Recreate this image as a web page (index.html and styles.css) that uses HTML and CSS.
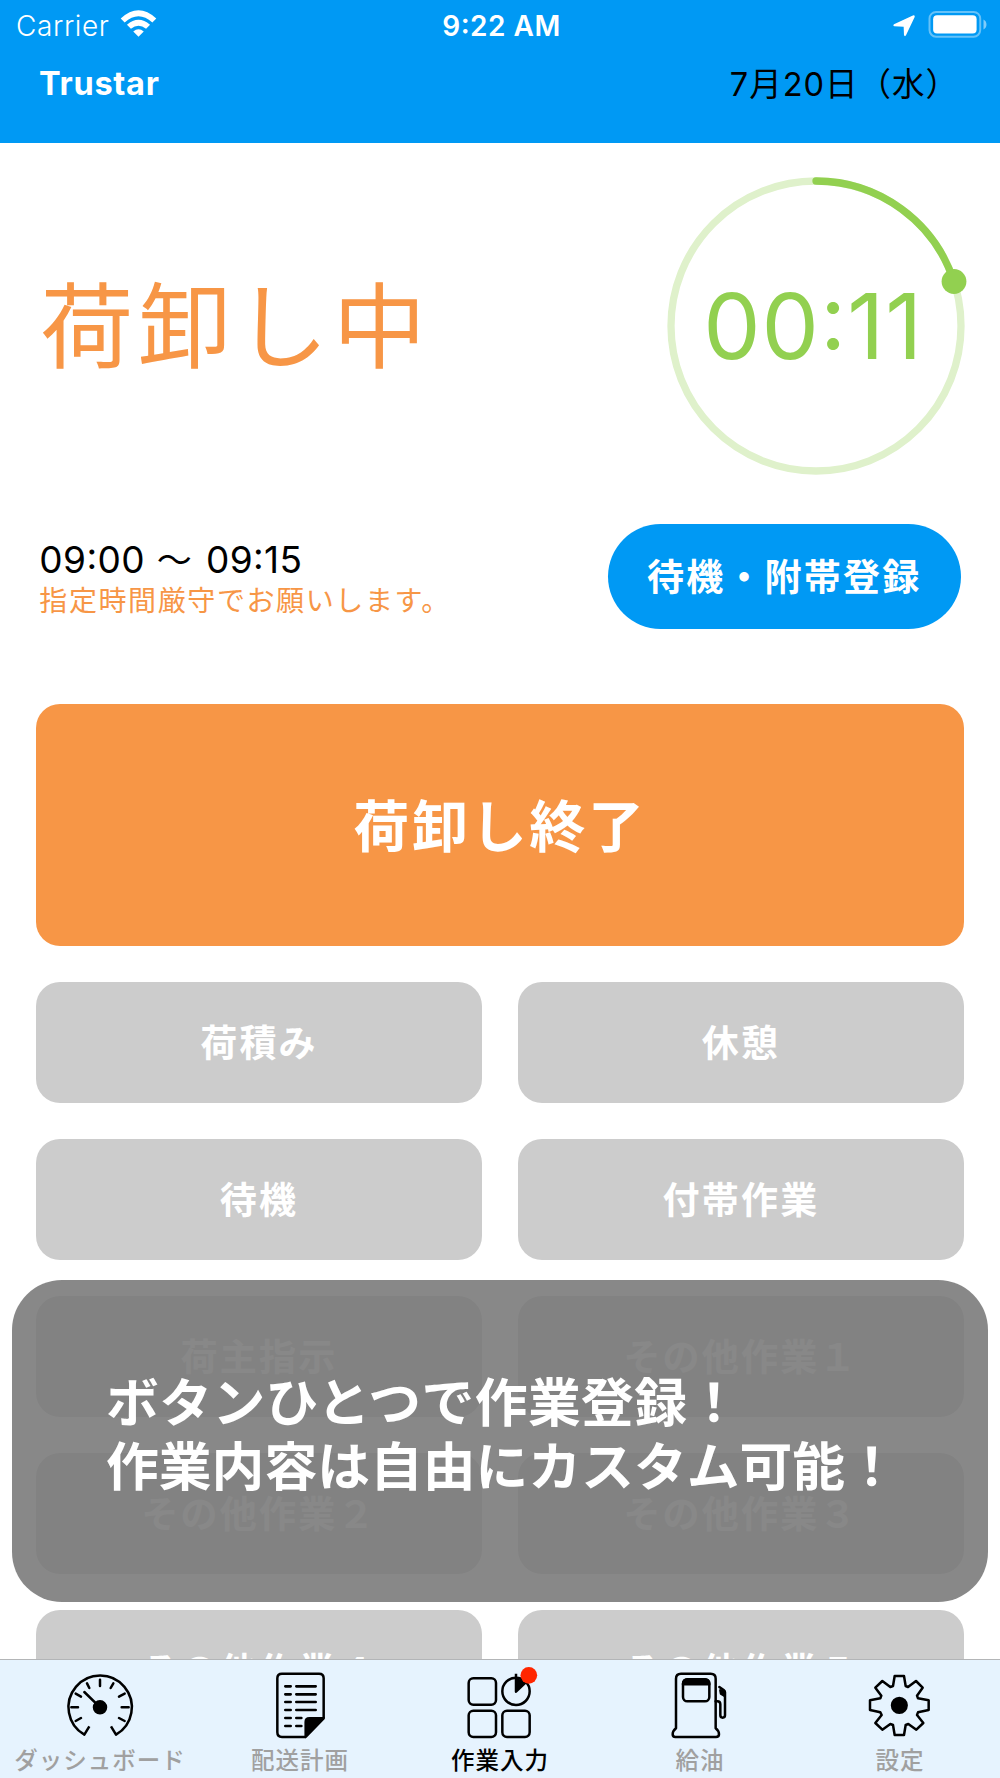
FILE: index.html
```html
<!DOCTYPE html>
<html lang="ja">
<head>
  <meta charset="UTF-8" />
  <meta name="viewport" content="width=device-width, initial-scale=1.0"/>
  <title>Trustar</title>
  <link rel="stylesheet" href="styles.css">
</head>
<body>
  <div class="app">
    <header class="header">
      <div class="status-bar">
        <div class="status-left">
          <span class="carrier">Carrier</span>
          <svg class="wifi" viewBox="0 0 110 82">
            <path d="M1 26 Q55 -24 109 26 L97 38 Q55 0 13 38 Z"/>
            <path d="M20 45 Q55 14 90 45 L78 57 Q55 38 32 57 Z"/>
            <path d="M39 65 Q55 52 71 65 L55 81 Z"/>
          </svg>
        </div>
        <span class="clock">9:22 AM</span>
        <div class="status-right">
          <svg class="location" viewBox="0 0 66 66">
            <path d="M62 1 Q66 1 65 6 L39 61 Q36 66 33 61 L32 35 L4 34 Q-1 32 3 28 L58 2 Z"/>
          </svg>
          <svg class="battery" viewBox="0 0 176 82">
            <rect class="battery-case" x="3" y="3" width="154" height="75" rx="20"/>
            <rect x="14" y="13" width="132" height="55" rx="12"/>
            <path class="battery-cap" d="M167 26 Q176 31 176 41 Q176 51 167 56 Z"/>
          </svg>
        </div>
      </div>
      <div class="title-bar">
        <h1 class="brand">Trustar</h1>
        <span class="date">7月20日（水）</span>
      </div>
    </header>

    <main class="content">
      <section class="status">
        <h2 class="status-name">荷卸し中</h2>
        <div class="timer">
          <svg class="timer-ring" viewBox="0 0 312 312">
            <circle class="ring-track" cx="156" cy="156" r="145"/>
            <path class="ring-value" d="M156 11 A145 145 0 0 1 294 112"/>
            <circle class="ring-dot" cx="294" cy="111.500" r="12.4"/>
          </svg>
          <span class="timer-text">00:11</span>
        </div>
      </section>

      <section class="schedule">
        <div class="schedule-info">
          <p class="schedule-time">09:00 <span class="tilde">〜</span> 09:15</p>
          <p class="schedule-note">指定時間厳守でお願いします。</p>
        </div>
        <button class="register-btn">待機・附帯登録</button>
      </section>

      <section class="work-grid">
        <button class="work-btn finish-btn">荷卸し終了</button>
        <button class="work-btn">荷積み</button>
        <button class="work-btn">休憩</button>
        <button class="work-btn">待機</button>
        <button class="work-btn">付帯作業</button>
        <button class="work-btn">荷主指示</button>
        <button class="work-btn">その他作業１</button>
        <button class="work-btn">その他作業２</button>
        <button class="work-btn">その他作業３</button>
        <button class="work-btn">その他作業４</button>
        <button class="work-btn">その他作業５</button>
      </section>
    </main>

    <nav class="tab-bar">
      <a class="tab">
        <svg class="tab-icon" viewBox="0 0 240 240">
          <path d="M88 184 L73 209 A95 95 0 1 1 168 209 L153 184"/>
          <path d="M120 44v19M81 55l7 14M47 86l16 9M34 127h20M47 168l16-9M160 55l-8 14M194 86l-17 9M206 127h-21M194 168l-17-9M73 81l45 44" stroke-linecap="round"/>
          <circle class="fill" cx="120" cy="127" r="18"/>
        </svg>
        <span>ダッシュボード</span>
      </a>
      <a class="tab">
        <svg class="tab-icon" viewBox="0 0 240 240">
          <path d="M137 216 H66 Q52 216 52 202 V40 Q52 26 66 26 H177 Q191 26 191 40 V160"/>
          <path class="fill" d="M137 216 V171 Q137 160 148 160 H191 Z"/>
          <path class="doc-lines" d="M76 64h16M109 64h58M76 88h16M109 88h58M76 111h16M109 111h58M76 135h16M109 135h58M76 159h16M109 159h15M76 183h16M109 183h15"/>
        </svg>
        <span>配送計画</span>
      </a>
      <a class="tab active">
        <svg class="tab-icon" viewBox="0 0 240 240">
          <rect x="26" y="40" width="82" height="79" rx="14"/>
          <rect x="26" y="137" width="82" height="79" rx="14"/>
          <rect x="127" y="137" width="82" height="79" rx="14"/>
          <circle cx="168" cy="79" r="41"/>
          <path class="fill" d="M168 26 V80 L195 54 L168 42"/>
          <circle class="badge" cx="206.500" cy="31" r="25"/>
        </svg>
        <span>作業入力</span>
      </a>
      <a class="tab">
        <svg class="tab-icon" viewBox="0 0 240 240">
          <path d="M48 190 V41 Q48 26 63 26 H152 Q167 26 167 41 V190 Q177 198 177 208 Q177 216 168 216 H46 Q38 216 38 208 Q38 198 48 190 Z"/>
          <rect x="69" y="43" width="79" height="66" rx="13"/>
          <path class="fill" d="M69 58 Q69 43 84 43 H133 Q148 43 148 58 Z"/>
          <path d="M167 109 H172 Q181 109 181 118 V151 Q181 158 188 158 Q195 158 195 151 V82 Q195 78 191 75 L178 66" stroke-linecap="round"/>
          <path class="fill" d="M181 76 L193 80 V92 L183 86 Z"/>
        </svg>
        <span>給油</span>
      </a>
      <a class="tab">
        <svg class="tab-icon" viewBox="0 0 240 240">
          <path d="M99 63 L104 33 H132 L137 63 L144 66 L168 48 L188 68 L171 92 L174 100 L206 106 V135 L174 142 L171 150 L190 174 L169 194 L145 177 L137 180 L132 210 H104 L99 180 L91 177 L67 194 L46 174 L65 150 L61 142 L30 135 V106 L61 100 L64 92 L46 68 L67 48 L91 66 Z"/>
          <circle class="fill" cx="118" cy="121" r="22"/>
        </svg>
        <span>設定</span>
      </a>
    </nav>

    <div class="guide">
      <p class="guide-lead">ボタンひとつで作業登録！</p>
      <p>作業内容は自由にカスタム可能！</p>
    </div>
  </div>
</body>
</html>
```

FILE: styles.css
```css
* {
  box-sizing: border-box;
}

body {
  margin: 0;
  background: #fff;
  font-family: Inter, 'Noto Sans CJK JP', sans-serif;
  color: #000;
}

h1, h2, p {
  margin: 0;
}

button {
  border: none;
  padding: 0;
  font-family: inherit;
  color: #fff;
}

.app {
  position: relative;
  display: flex;
  flex-direction: column;
  width: 1000px;
  height: 1778px;
  overflow: hidden;
}

/* header */
.header {
  flex: none;
  height: 142.6px;
  background: #0099f4;
}

.status-bar {
  display: grid;
  grid-template-columns: 1fr auto 1fr;
  align-items: center;
  height: 51px;
  padding: 0 13px 0 16px;
  color: #fff;
  font-size: 28px;
}

.status-left, .status-right {
  display: flex;
  align-items: center;
}

.status-left {
  gap: 10px;
}

.status-right {
  justify-content: flex-end;
  gap: 13px;
}

.carrier {
  font-weight: 300;
  letter-spacing: 0.6px;
}

.clock {
  font-weight: 600;
  letter-spacing: 0.5px;
  font-feature-settings: "case";
}

.status-bar svg {
  fill: #fff;
}

.wifi {
  width: 37px;
  height: 27px;
  margin-top: -4px;
}

.location {
  width: 22px;
  height: 22px;
}

.battery {
  width: 59px;
  height: 27px;
  margin-top: -2px;
}

.status-bar .battery-case {
  fill: none;
  stroke: rgba(255, 255, 255, 0.4);
  stroke-width: 6;
}

.status-bar .battery-cap {
  fill: rgba(255, 255, 255, 0.5);
}

.title-bar {
  display: flex;
  justify-content: space-between;
  align-items: center;
  height: 64px;
  padding: 0 41px 0 39px;
}

.brand {
  color: #fff;
  font-size: 32.500px;
  font-weight: 700;
  letter-spacing: 0.7px;
}

.date {
  padding-bottom: 3px;
  font-size: 32.500px;
  letter-spacing: 1px;
}

/* current work */
.content {
  flex: 1;
  min-height: 0;
  overflow: hidden;
  padding: 27.400px 36.300px 0;
}

.status {
  display: flex;
  justify-content: space-between;
  align-items: center;
  height: 312px;
}

.status-name {
  padding: 0 0 10px 4px;
  color: #f79646;
  font-size: 93px;
  font-weight: 400;
  letter-spacing: 4.6px;
}

.timer {
  display: grid;
  place-items: center;
  width: 312px;
  height: 312px;
  margin-right: -8px;
}

.timer-ring, .timer-text {
  grid-area: 1 / 1;
}

.timer-ring {
  width: 312px;
  height: 312px;
  fill: none;
}

.ring-track {
  stroke: #dff1cb;
  stroke-width: 7.3;
}

.ring-value {
  stroke: #92d050;
  stroke-width: 7.3;
  stroke-linecap: round;
}

.ring-dot {
  fill: #92d050;
}

.timer-text {
  margin-right: 5px;
  color: #92d050;
  font-size: 91px;
  letter-spacing: 1px;
  font-feature-settings: "case";
}

.schedule {
  display: flex;
  justify-content: space-between;
  align-items: flex-start;
  height: 222.300px;
  padding: 42px 3px 0;
}

.schedule-info {
  padding-top: 13px;
}

.schedule-time {
  font-size: 37px;
  line-height: 45px;
  letter-spacing: 0.4px;
  font-feature-settings: "case";
}

.tilde {
  margin: 0 3px 0 1px;
  font-size: 35px;
}

.schedule-note {
  color: #f79646;
  font-size: 28px;
  line-height: 36px;
  letter-spacing: 1.600px;
}

.register-btn {
  width: 353px;
  height: 105px;
  padding-bottom: 2px;
  border-radius: 53px;
  background: #0099f4;
  font-size: 37px;
  font-weight: 600;
  letter-spacing: 2.2px;
}

/* work buttons */
.work-grid {
  display: grid;
  grid-template-columns: 1fr 1fr;
  grid-auto-rows: 120.500px;
  grid-template-rows: 241.500px;
  gap: 36.500px;
}

.work-btn {
  padding-bottom: 4px;
  border-radius: 24px;
  background: #ccc;
  font-size: 37px;
  font-weight: 600;
  letter-spacing: 2.2px;
}

.finish-btn {
  grid-column: 1 / -1;
  padding-bottom: 6px;
  background: #f79646;
  font-size: 56px;
  letter-spacing: 2.7px;
}

/* bottom tabs */
.tab-bar {
  flex: none;
  display: grid;
  grid-template-columns: repeat(5, 1fr);
  height: 119px;
  border-top: 1.500px solid #b3b5b7;
  background: #e6f3fe;
}

.tab {
  display: flex;
  flex-direction: column;
  align-items: center;
  padding-top: 5px;
  color: #a0a0a0;
  font-size: 23.500px;
  font-weight: 500;
  line-height: 32px;
  letter-spacing: 1px;
  white-space: nowrap;
}

.tab.active {
  color: #000;
}

.tab-icon {
  flex: none;
  width: 80px;
  height: 80px;
  fill: none;
  stroke: #000;
  stroke-width: 7.500;
  stroke-linejoin: round;
}

.tab-icon .fill {
  fill: #000;
}

.tab-icon .doc-lines {
  stroke-width: 8;
  stroke-linecap: round;
}

.tab-icon .badge {
  fill: #ff2600;
  stroke: none;
}

/* guide message over the buttons */
.guide {
  position: absolute;
  left: 12px;
  top: 1280px;
  width: 976px;
  height: 322px;
  padding: 91px 0 0 94px;
  border-radius: 50px;
  background: rgba(120, 120, 120, 0.88);
  color: #fff;
  font-size: 52.800px;
  font-weight: 700;
  line-height: 64px;
  white-space: nowrap;
}

.guide-lead {
  letter-spacing: 0.4px;
}
```
